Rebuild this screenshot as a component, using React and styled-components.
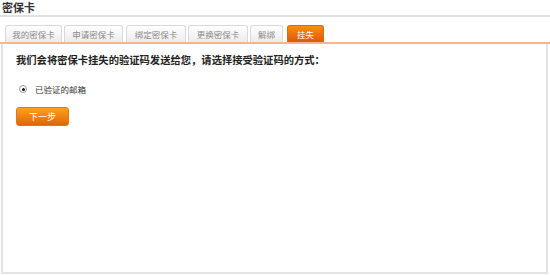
import React from "react";
import styled, { createGlobalStyle } from "styled-components";

const Global = createGlobalStyle`
  html, body { margin: 0; padding: 0; background: #fff; }
  body { font-family: "Noto Sans CJK SC", "Liberation Sans", sans-serif; }
`;

const Page = styled.div`
  width: 550px;
  height: 275px;
  display: flex;
  flex-direction: column;
`;

const Title = styled.div`
  height: 15px;
  line-height: 14px;
  padding-left: 2px;
  font-size: 11px;
  font-weight: 700;
  color: #333;
  border-bottom: 2px solid #e0e0e0;
`;

const Tabs = styled.div`
  margin-top: 8px;
  padding-left: 5px;
  display: flex;
  align-items: flex-end;
  gap: 2px;
  border-bottom: 2px solid #f3b497;
`;

const Tab = styled.div`
  height: 17px;
  box-sizing: border-box;
  padding: 0;
  white-space: nowrap;
  flex: none;
  margin-right: ${(p) => p.$mr || 0}px;
  display: flex;
  align-items: center;
  justify-content: center;
  font-size: 8.5px;
  border-radius: 3px 3px 0 0;
  border: 1px solid ${(p) => (p.$active ? "#e06a0a" : "#d9d9d9")};
  border-bottom: none;
  color: ${(p) => (p.$active ? "#fff" : "#8a8a8a")};
  background: ${(p) =>
    p.$active
      ? "linear-gradient(#fb8d12, #dc5807)"
      : "linear-gradient(#ffffff, #ececec)"};
  width: ${(p) => p.$w}px;
`;

const Box = styled.div`
  flex: 1;
  margin: 0 2px 1px 1px;
  border: 2px solid #e4e4e4;
  border-top: none;
  padding: 9px 0 0 12px;
  display: flex;
  flex-direction: column;
  align-items: flex-start;
`;

const Heading = styled.div`
  font-size: 10.3px;
  font-weight: 700;
  color: #222;
  line-height: 14px;
  margin-left: 1px;
`;

const Option = styled.label`
  margin-top: 16px;
  margin-left: 4px;
  display: flex;
  align-items: center;
  gap: 8px;
  font-size: 8.5px;
  color: #333;
`;

const Radio = styled.span`
  width: 6px;
  height: 6px;
  border-radius: 50%;
  border: 1px solid #9a9a9a;
  background: #fff;
  display: flex;
  align-items: center;
  justify-content: center;
  &::after {
    content: "";
    width: 3px;
    height: 3px;
    border-radius: 50%;
    background: #111;
  }
`;

const Button = styled.button`
  margin-top: 12px;
  margin-left: 1px;
  width: 53px;
  height: 19px;
  border: 1px solid #e3780c;
  border-radius: 3px;
  background: linear-gradient(#fca21c, #e06606);
  color: #fff;
  font-family: inherit;
  font-size: 9px;
  padding: 0;
  cursor: pointer;
`;

const tabs = [
  { label: "我的密保卡", w: 57 },
  { label: "申请密保卡", w: 59, mr: 1 },
  { label: "绑定密保卡", w: 60, mr: 0 },
  { label: "更换密保卡", w: 60 },
  { label: "解绑", w: 33, mr: 2 },
  { label: "挂失", w: 37, active: true },
];

export default function App() {
  return (
    <Page>
      <Global />
      <Title>密保卡</Title>
      <Tabs>
        {tabs.map((t) => (
          <Tab key={t.label} $w={t.w} $mr={t.mr} $active={t.active}>
            {t.label}
          </Tab>
        ))}
      </Tabs>
      <Box>
        <Heading>我们会将密保卡挂失的验证码发送给您，请选择接受验证码的方式：</Heading>
        <Option>
          <Radio />
          已验证的邮箱
        </Option>
        <Button>下一步</Button>
      </Box>
    </Page>
  );
}
